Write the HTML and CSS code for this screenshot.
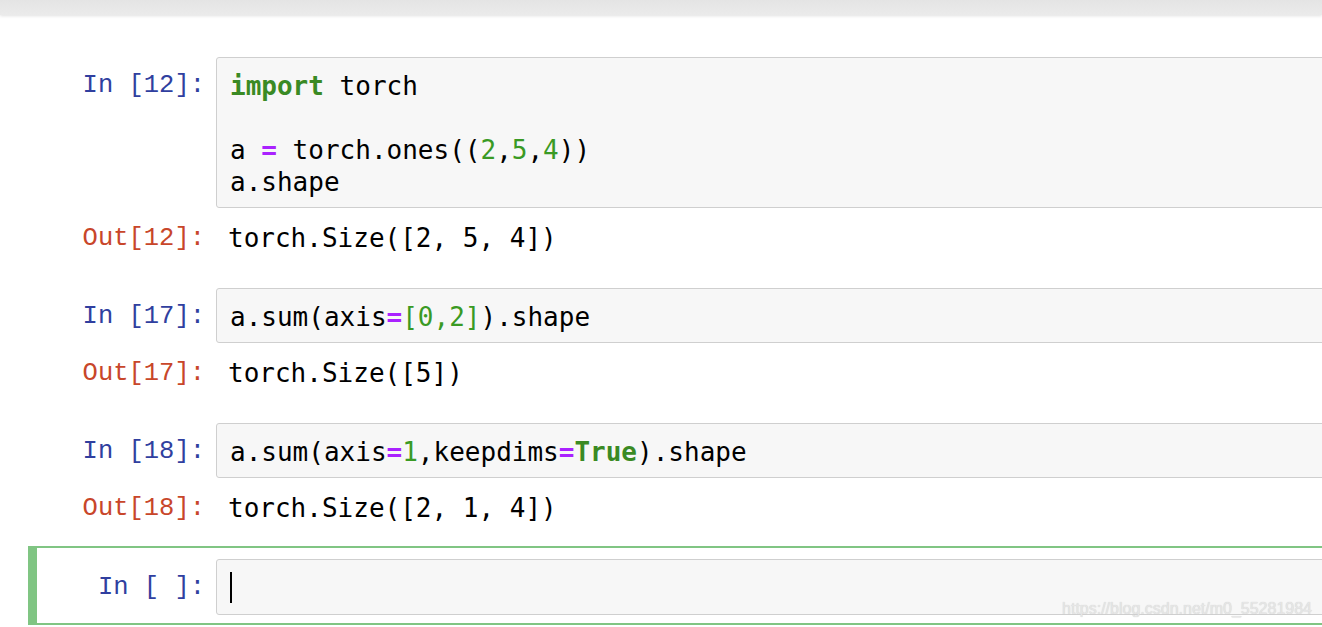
FILE: index.html
```html
<!DOCTYPE html>
<html>
<head>
<meta charset="utf-8">
<link rel="stylesheet" href="styles.css">
</head>
<body>
<div class="topbar"></div>
<div class="notebook">
  <div class="cell">
    <div class="row">
      <div class="prompt in">In&nbsp;[12]:</div>
      <div class="input"><pre><span class="kw">import</span> torch

a <span class="op">=</span> torch.ones((<span class="num">2</span>,<span class="num">5</span>,<span class="num">4</span>))
a.shape</pre></div>
    </div>
    <div class="row out-row">
      <div class="prompt out">Out[12]:</div>
      <div class="output"><pre>torch.Size([2, 5, 4])</pre></div>
    </div>
  </div>

  <div class="cell">
    <div class="row">
      <div class="prompt in">In&nbsp;[17]:</div>
      <div class="input"><pre>a.sum(axis<span class="op">=</span><span class="num">[0,2]</span>).shape</pre></div>
    </div>
    <div class="row out-row">
      <div class="prompt out">Out[17]:</div>
      <div class="output"><pre>torch.Size([5])</pre></div>
    </div>
  </div>

  <div class="cell">
    <div class="row">
      <div class="prompt in">In&nbsp;[18]:</div>
      <div class="input"><pre>a.sum(axis<span class="op">=</span><span class="num">1</span>,keepdims<span class="op">=</span><span class="kw">True</span>).shape</pre></div>
    </div>
    <div class="row out-row">
      <div class="prompt out">Out[18]:</div>
      <div class="output"><pre>torch.Size([2, 1, 4])</pre></div>
    </div>
  </div>

  <div class="cell selected">
    <div class="row">
      <div class="prompt in">In&nbsp;[&nbsp;]:</div>
      <div class="input"><pre><span class="cursor"></span></pre></div>
    </div>
  </div>
</div>
<div class="watermark">https://blog.csdn.net/m0_55281984</div>
</body>
</html>
```
FILE: styles.css
```css
html, body {
  margin: 0;
  padding: 0;
  background: #ffffff;
  overflow: hidden;
  width: 1322px;
  height: 627px;
}

.topbar {
  height: 15px;
  background: linear-gradient(#e4e4e4, #ebebeb);
  box-shadow: 0 1px 3px rgba(0, 0, 0, 0.12);
  position: relative;
  z-index: 1;
}

.notebook {
  padding-top: 30px;
  padding-left: 28px;
  width: 1500px;
}

.cell {
  border: 2px solid transparent;
  border-left-width: 9px;
  padding: 10px 0 8px 0;
}

.cell.selected {
  border-color: #80c583;
  padding-top: 11px;
}

.cell.selected .input {
  padding-bottom: 10px;
}

.row {
  display: flex;
  align-items: flex-start;
}

.prompt {
  width: 168px;
  flex: none;
  text-align: right;
  padding-right: 11px;
  padding-top: 13px;
  font-family: "Liberation Mono", monospace;
  font-size: 25.5px;
  line-height: 32px;
  white-space: nowrap;
}

.prompt.in {
  color: #303f9f;
}

.prompt.out {
  color: #c8462a;
  padding-top: 1px;
  margin-left: -2px;
  width: 170px;
}

pre {
  margin: 0;
  font-family: "DejaVu Sans Mono", monospace;
  font-size: 26px;
  line-height: 32px;
  color: #000;
}

.input {
  flex: 1;
  background: #f7f7f7;
  border: 1px solid #cfcfcf;
  border-radius: 3px;
  padding: 12px 13px 9px 13px;
}

.out-row {
  padding-top: 14px;
  padding-bottom: 11px;
}

.output {
  padding-left: 12px;
  padding-top: 0;
}

.kw {
  color: #3a8a24;
  font-weight: bold;
}

.op {
  color: #aa22ff;
  font-weight: bold;
}

.num {
  color: #3a9a24;
}

.cursor {
  display: inline-block;
  width: 2px;
  height: 31px;
  background: #000;
  vertical-align: -6px;
}

.watermark {
  position: absolute;
  right: 10px;
  bottom: 9px;
  font-family: "Liberation Sans", sans-serif;
  font-size: 16px;
  color: #e6e6e6;
  text-shadow: 0 0 1px #c8c8c8;
}
```
